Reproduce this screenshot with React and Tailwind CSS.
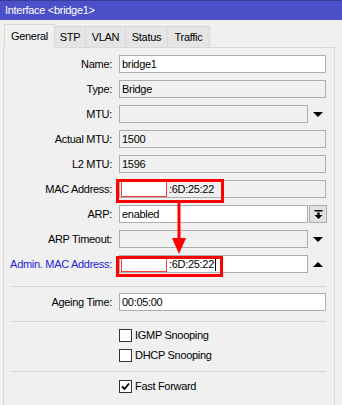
import React from 'react';

const font = { fontFamily: '"Liberation Sans", Arial, sans-serif' };

const DownTri = () => (
    <svg width="10" height="5" viewBox="0 0 10 5"><polygon points="0,0 10,0 5,5" fill="#000" /></svg>
);

const UpTri = () => (
    <svg width="10" height="5" viewBox="0 0 10 5"><polygon points="0,5 10,5 5,0" fill="#000" /></svg>
);

const Field = ({ label, children, blue }) => (
    <div className="flex items-center h-[18px]">
        <div className={`w-[109px] pr-px text-right ${blue ? 'text-[#2323d6]' : 'text-black'}`}>{label}</div>
        <div className="ml-[6px] flex items-center">{children}</div>
    </div>
);

const Box = ({ w = 207, white, children }) => (
    <div
        className={`h-[18px] border border-[#adadad] pl-[2px] flex items-center text-black ${white ? 'bg-white' : 'bg-[#f0f0f0]'}`}
        style={{ width: w }}
    >
        {children}
    </div>
);

const Hidden = () => (
    <span className="-ml-px mr-[2px] inline-block w-[46px] h-[16px] bg-white border border-[#ff3b3b]" />
);

const Check = ({ on, label }) => (
    <div className="flex items-center h-[13px] pl-[115px]">
        <div className="w-[13px] h-[13px] bg-white border border-[#333] flex items-center justify-center">
            {on && (
                <svg width="9" height="9" viewBox="0 0 9 9">
                    <path d="M1 4.5 L3.5 7 L8 1.5" stroke="#000" strokeWidth="1.8" fill="none" />
                </svg>
            )}
        </div>
        <span className="ml-[3px] text-black">{label}</span>
    </div>
);

const Sep = () => <div className="ml-[7px] w-[315px] h-px bg-[#d6d6d6]" />;

export default function App() {
    const tabs = [
        { name: 'STP', w: 31 },
        { name: 'VLAN', w: 40 },
        { name: 'Status', w: 42 },
        { name: 'Traffic', w: 42 },
    ];

    return (
        <div className="relative w-[342px] h-[405px] overflow-hidden bg-[#f0f0f0] text-[11px] tracking-[-0.3px]" style={font}>
            {/* title */}
            <div className="h-[20px] bg-[#4b4fc8] border-t border-[#3a3d9e] flex items-center pl-[5px] text-white">
                Interface &lt;bridge1&gt;
            </div>

            {/* tabs */}
            <div className="flex items-end pl-[4px] pt-[4px] h-[27px]">
                <div className="relative z-10 w-[51px] h-[24px] -mb-px border border-b-0 border-[#d9d9d9] bg-[#f0f0f0] flex items-center justify-center text-black pb-px">
                    General
                </div>
                {tabs.map((t) => (
                    <div
                        key={t.name}
                        className="h-[21px] border-t border-r border-[#d9d9d9] bg-[#e5e5e5] flex items-center justify-center text-black"
                        style={{ width: t.w }}
                    >
                        {t.name}
                    </div>
                ))}
            </div>

            {/* panel */}
            <div className="ml-[3px] w-[332px] h-[400px] border border-[#d9d9d9] bg-[#f0f0f0] pt-[7px]">
                <div className="flex flex-col gap-[7px]">
                    <Field label="Name:"><Box white>bridge1</Box></Field>
                    <Field label="Type:"><Box>Bridge</Box></Field>
                    <Field label="MTU:">
                        <Box w={189} />
                        <div className="w-[18px] ml-px flex justify-center"><DownTri /></div>
                    </Field>
                    <Field label="Actual MTU:"><Box>1500</Box></Field>
                    <Field label="L2 MTU:"><Box>1596</Box></Field>
                    <Field label="MAC Address:">
                        <Box><Hidden />:6D:25:22</Box>
                    </Field>
                    <Field label="ARP:">
                        <Box w={189} white>enabled</Box>
                        <div className="ml-px w-[18px] h-[18px] border border-[#adadad] bg-[#e1e1e1] flex items-center justify-center">
                            <svg width="9" height="9" viewBox="0 0 9 9">
                                <rect x="0.5" y="0" width="8" height="1.5" fill="#000" />
                                <rect x="3.3" y="2.5" width="2.4" height="2.5" fill="#000" />
                                <polygon points="0.5,5 8.5,5 4.5,9" fill="#000" />
                            </svg>
                        </div>
                    </Field>
                    <Field label="ARP Timeout:">
                        <Box w={189} />
                        <div className="w-[18px] ml-px flex justify-center"><DownTri /></div>
                    </Field>
                    <Field label="Admin. MAC Address:" blue>
                        <Box w={189} white>
                            <Hidden />:6D:25:22<span className="ml-px w-px h-[13px] bg-black" />
                        </Box>
                        <div className="w-[18px] ml-px flex justify-center"><UpTri /></div>
                    </Field>
                </div>

                <div className="mt-[13px]"><Sep /></div>
                <div className="mt-[6px]"><Field label="Ageing Time:"><Box white>00:05:00</Box></Field></div>
                <div className="mt-[10px]"><Sep /></div>
                <div className="mt-[7px] flex flex-col gap-[7px]">
                    <Check label="IGMP Snooping" />
                    <Check label="DHCP Snooping" />
                </div>
                <div className="mt-[9px]"><Sep /></div>
                <div className="mt-[8px]"><Check on label="Fast Forward" /></div>
            </div>

            {/* red markers */}
            <div className="absolute left-[116px] top-[179px] w-[108px] h-[24px] border-[3px] border-[#ff0000]" />
            <div className="absolute left-[116px] top-[256px] w-[107px] h-[21px] border-[3px] border-[#ff0000]" />
            <svg className="absolute left-[170px] top-[203px]" width="18" height="52" viewBox="0 0 18 52">
                <rect x="7.5" y="0" width="3" height="37" fill="#ff0000" />
                <polygon points="2,35 16,35 9,51" fill="#ff0000" />
            </svg>
        </div>
    );
}
